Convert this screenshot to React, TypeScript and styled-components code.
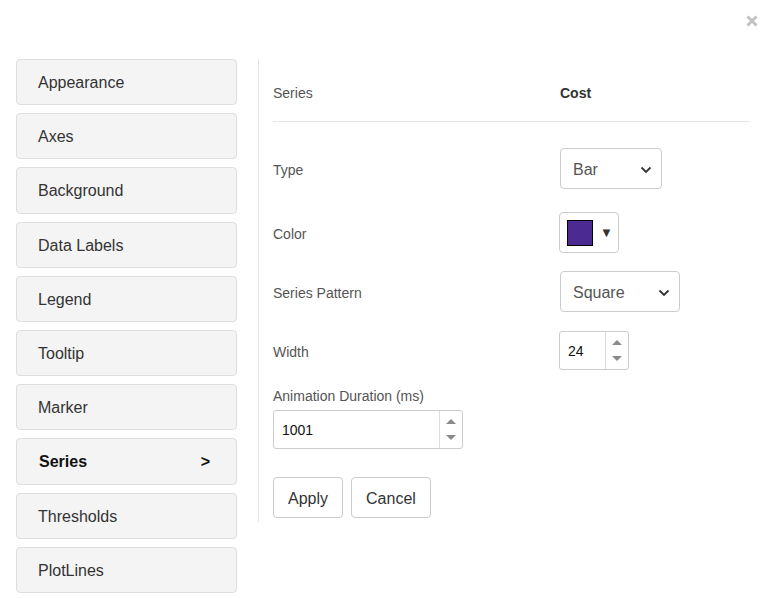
import React from "react";
import styled, { createGlobalStyle } from "styled-components";

const Global = createGlobalStyle`
  html, body { margin: 0; padding: 0; background: #fff; }
  body { font-family: "Liberation Sans", Arial, sans-serif; color: #333; }
  * { box-sizing: border-box; }
`;

const Page = styled.div`
  width: 766px;
  height: 598px;
  overflow: hidden;
  position: relative;
`;

const TopBar = styled.div`
  height: 59px;
  display: flex;
  justify-content: flex-end;
  align-items: flex-start;
  padding: 15px 8px 0 0;
`;

const CloseBtn = styled.button`
  border: none;
  background: none;
  padding: 0;
  width: 12px;
  height: 12px;
  display: flex;
  cursor: pointer;
`;

const Main = styled.div`
  display: flex;
  align-items: flex-start;
  padding-left: 16px;
`;

const Sidebar = styled.nav`
  width: 221px;
  display: flex;
  flex-direction: column;
  gap: 8px;
  flex-shrink: 0;
`;

const MenuItem = styled.div<{ $active?: boolean }>`
  height: 46.2px;
  border: 1px solid #dedede;
  border-radius: 4px;
  background: #f4f4f4;
  display: flex;
  align-items: center;
  justify-content: space-between;
  padding: 2px 26px 0 ${(p) => (p.$active ? 22 : 21)}px;
  font-size: 16px;
  font-weight: ${(p) => (p.$active ? 700 : 400)};
  color: ${(p) => (p.$active ? "#111" : "#333")};
  flex-shrink: 0;
`;

const Panel = styled.section`
  margin-left: 21px;
  border-left: 1px solid #e6e6e6;
  height: 463px;
  padding-left: 14px;
  width: 492px;
`;

const HeaderRow = styled.div`
  display: flex;
  align-items: center;
  height: 63px;
  padding-top: 5px;
  border-bottom: 1px solid #e6e6e6;
  font-size: 14px;
  line-height: 16px;
`;

const LabelCell = styled.div<{ $nudge?: number }>`
  width: 287px;
  flex-shrink: 0;
  color: #555;
  font-size: 14px;
  padding-top: ${(p) => p.$nudge ?? 0}px;
`;

const HeaderValue = styled.div`
  font-weight: 700;
  color: #333;
`;

const Row = styled.div<{ $top: number }>`
  display: flex;
  align-items: center;
  margin-top: ${(p) => p.$top}px;
`;

const Select = styled.div<{ $w: number }>`
  width: ${(p) => p.$w}px;
  height: 41px;
  border: 1px solid #ccc;
  border-radius: 4px;
  display: flex;
  align-items: center;
  justify-content: space-between;
  padding: 2px 9px 0 12px;
  font-size: 16px;
  color: #555;
`;

const ColorButton = styled.div`
  margin-left: -1px;
  width: 60px;
  height: 41px;
  border: 1px solid #ccc;
  border-radius: 4px;
  display: flex;
  align-items: center;
  padding-left: 7px;
  gap: 7px;
`;

const Swatch = styled.div<{ $color: string }>`
  width: 26px;
  height: 26px;
  border: 1px solid #000;
  background: ${(p) => p.$color};
`;

const Caret = styled.span`
  font-size: 13px;
  color: #333;
`;

const NumberBox = styled.div<{ $w: number; $shift?: number }>`
  width: ${(p) => p.$w}px;
  height: 39px;
  margin-left: ${(p) => p.$shift ?? 0}px;
  border: 1px solid #ccc;
  border-radius: 3px;
  display: flex;
  align-items: stretch;
  font-size: 14px;
  color: #111;
`;

const NumberValue = styled.div`
  flex: 1;
  display: flex;
  align-items: center;
  padding: 1px 0 0 8px;
`;

const Spinner = styled.div`
  width: 23px;
  border-left: 1px solid #ddd;
  display: flex;
  flex-direction: column;
  align-items: center;
  justify-content: center;
  gap: 11px;
`;

const Tri = styled.div<{ $down?: boolean }>`
  width: 0;
  height: 0;
  border-left: 5px solid transparent;
  border-right: 5px solid transparent;
  ${(p) =>
    p.$down
      ? "border-top: 5px solid #8a8a8a;"
      : "border-bottom: 5px solid #8a8a8a;"}
`;

const StackLabel = styled.div`
  margin-top: 17px;
  font-size: 14px;
  line-height: 16px;
  color: #555;
  padding-top: 1px;
`;

const StackField = styled.div`
  margin-top: 6px;
`;

const Actions = styled.div`
  display: flex;
  gap: 8px;
  margin-top: 28px;
`;

const Button = styled.button`
  height: 41px;
  padding: 2px 14px 0;
  background: #fff;
  border: 1px solid #ccc;
  border-radius: 4px;
  font-family: "Liberation Sans", Arial, sans-serif;
  font-size: 16px;
  color: #333;
`;

const Chevron = () => (
  <svg width="12" height="8" viewBox="0 0 12 8">
    <path d="M1.5 1.5 L6 6 L10.5 1.5" fill="none" stroke="#333" strokeWidth="1.8" />
  </svg>
);

const items = [
  "Appearance",
  "Axes",
  "Background",
  "Data Labels",
  "Legend",
  "Tooltip",
  "Marker",
  "Series",
  "Thresholds",
  "PlotLines",
];

export default function App() {
  return (
    <Page>
      <Global />
      <TopBar>
        <CloseBtn aria-label="close">
          <svg width="12" height="12" viewBox="0 0 12 12">
            <path d="M1.5 1.5 L10.5 10.5 M10.5 1.5 L1.5 10.5" stroke="#c2c2c2" strokeWidth="3" />
          </svg>
        </CloseBtn>
      </TopBar>
      <Main>
        <Sidebar>
          {items.map((it) => (
            <MenuItem key={it} $active={it === "Series"}>
              <span>{it}</span>
              {it === "Series" && <span>&gt;</span>}
            </MenuItem>
          ))}
        </Sidebar>
        <Panel>
          <HeaderRow>
            <LabelCell>Series</LabelCell>
            <HeaderValue>Cost</HeaderValue>
          </HeaderRow>
          <Row $top={26}>
            <LabelCell $nudge={2}>Type</LabelCell>
            <Select $w={102}>
              <span>Bar</span>
              <Chevron />
            </Select>
          </Row>
          <Row $top={23}>
            <LabelCell $nudge={2}>Color</LabelCell>
            <ColorButton>
              <Swatch $color="#4b2a91" />
              <Caret>▼</Caret>
            </ColorButton>
          </Row>
          <Row $top={18}>
            <LabelCell $nudge={2}>Series Pattern</LabelCell>
            <Select $w={120}>
              <span>Square</span>
              <Chevron />
            </Select>
          </Row>
          <Row $top={19}>
            <LabelCell $nudge={2}>Width</LabelCell>
            <NumberBox $w={70} $shift={-1}>
              <NumberValue>24</NumberValue>
              <Spinner>
                <Tri />
                <Tri $down />
              </Spinner>
            </NumberBox>
          </Row>
          <StackLabel>Animation Duration (ms)</StackLabel>
          <StackField>
            <NumberBox $w={190}>
              <NumberValue>1001</NumberValue>
              <Spinner>
                <Tri />
                <Tri $down />
              </Spinner>
            </NumberBox>
          </StackField>
          <Actions>
            <Button>Apply</Button>
            <Button>Cancel</Button>
          </Actions>
        </Panel>
      </Main>
    </Page>
  );
}
